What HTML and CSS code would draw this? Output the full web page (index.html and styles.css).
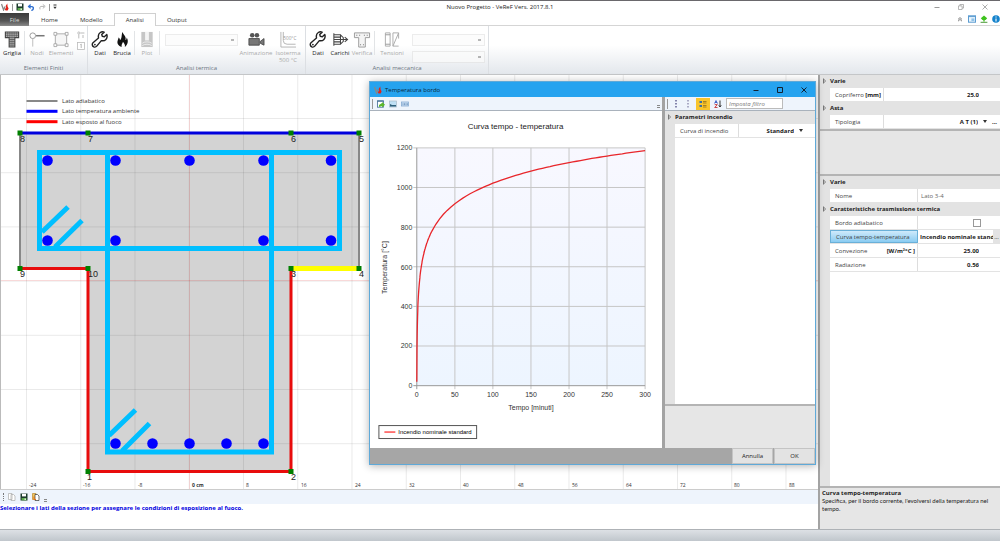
FILE: index.html
```html
<!DOCTYPE html>
<html lang="it">
<head>
  <meta charset="UTF-8">
  <meta name="viewport" content="width=device-width, initial-scale=1.0">
  <title>Nuovo Progetto - VeReF Vers. 2017.8.1</title>
  <link rel="stylesheet" href="styles.css">
</head>
<body>
  <svg class="defs" aria-hidden="true">
    <symbol id="logo" viewBox="0 0 8 8">
      <path d="M0.5 1 L2.6 7 L4 3.6" fill="none" stroke="#888" stroke-width="1.3"/>
      <path d="M6.3 0.4 L4.6 3 L5.2 4.4 L3.8 6.2 L4.6 7.6 L6.6 7.6 L7.6 5.4 L6.6 3.6 Z" fill="#e2231a"/>
    </symbol>
    <symbol id="floppy" viewBox="0 0 8 8">
      <path d="M0.5 0.5h7v7h-7z" fill="#1d3b2c"/>
      <path d="M2 0.8h4v2.6h-4z" fill="#fff"/>
      <path d="M1.6 5h4.8v2.3h-4.8z" fill="#5cab4a"/>
      <path d="M4.6 5.4h1.2v1.6h-1.2z" fill="#fff"/>
    </symbol>
    <symbol id="wrench" viewBox="0 0 18 18">
      <path d="M16.2 3.6 L13.6 6.2 L11.4 5.6 L10.8 3.6 L13.4 1.2 C10.6 0.2 7.4 1.8 7.2 5.4 L7.4 7.4 L1.6 12.4 C0.2 13.8 0.8 16 2.4 16.8 C3.8 17.4 5 16.8 5.8 15.8 L10.4 10.2 C14.2 11.2 17.6 8 16.2 3.6 Z" fill="none" stroke="#222" stroke-width="1.5" stroke-linejoin="round"/>
      <circle cx="3.6" cy="14.4" r="0.9" fill="#222"/>
    </symbol>
  </svg>

  <header class="titlebar">
    <div class="quick">
      <svg class="ic8"><use href="#logo"/></svg>
      <i class="bar"></i>
      <svg class="ic8"><use href="#floppy"/></svg>
      <svg class="ic8" viewBox="0 0 8 8"><path d="M1.5 3.6 H5 Q7 3.8 6 6.6 L4.4 7.6" fill="none" stroke="#2f6fd0" stroke-width="1.4"/><path d="M3.6 0.8 L0.6 3.6 L3.6 6 Z" fill="#2f6fd0"/></svg>
      <svg class="ic8" viewBox="0 0 8 8"><path d="M6 3.4 H3 Q1 3.8 2 6.4" fill="none" stroke="#b4b4b4" stroke-width="1"/><path d="M4.8 1.4 L7.2 3.4 L4.8 5.4" fill="none" stroke="#b4b4b4"/></svg>
      <i class="bar"></i>
      <svg class="ic4" viewBox="0 0 4 6"><path d="M0.5 1h3" stroke="#333"/><path d="M0.3 2.8h3.4L2 5z" fill="#333"/></svg>
    </div>
    <h1>Nuovo Progetto - VeReF Vers. 2017.8.1</h1>
    <div class="winbtns">
      <button aria-label="Riduci"><svg class="ic6" viewBox="0 0 6 6"><path d="M0.5 3.5h5" stroke="#999"/></svg></button>
      <button aria-label="Ripristina"><svg class="ic6" viewBox="0 0 6 6"><path d="M0.5 1.9h3.6v3.6h-3.6zM1.9 1.9V0.5h3.6v3.6H4.1" fill="none" stroke="#999" stroke-width="0.7"/></svg></button>
      <button aria-label="Chiudi"><svg class="ic6" viewBox="0 0 6 6"><path d="M0.5 0.5l5 5M5.5 0.5l-5 5" stroke="#999" stroke-width="0.8"/></svg></button>
    </div>
  </header>

  <nav class="tabs">
    <button class="tab file">File</button>
    <button class="tab">Home</button>
    <button class="tab">Modello</button>
    <button class="tab active">Analisi</button>
    <button class="tab">Output</button>
    <div class="tabicons">
      <svg class="ic8" viewBox="0 0 8 8"><path d="M2 4.4L4 2.6L6 4.4M2 6.2L4 4.4L6 6.2" fill="none" stroke="#777" stroke-width="0.9"/></svg>
      <svg class="ic8" viewBox="0 0 8 8"><rect x="0.5" y="0.8" width="7" height="6.4" fill="#eaf5fd" stroke="#5b9bd0"/><path d="M0.5 1.6h7" stroke="#5b9bd0"/><path d="M3.4 3.4h3v2.6h-3z" fill="#8fc2e8"/></svg>
      <svg class="ic8" viewBox="0 0 8 8"><path d="M4 0.4L7.2 3.2L5.6 5H4.7V6.4H3.3V5H2.4L0.8 3.2z" fill="#3fc31e"/><path d="M0.6 7.3h6.8" stroke="#4d9a3a"/></svg>
      <svg class="ic8" viewBox="0 0 8 8"><circle cx="4" cy="4" r="3.8" fill="#1583cc"/><path d="M4 3.4v3M4 1.6v1" stroke="#fff" stroke-width="1.1"/></svg>
    </div>
  </nav>

  <section class="ribbon">
    <div class="group">
      <div class="tools">
        <button class="tool">
          <svg viewBox="0 0 18 18"><path d="M2 1h14v6h-4v10H6V7H2z" fill="#d8d8d8" stroke="#444" stroke-width="1.2"/><path d="M2 3h14M2 5h14M6 7h6M6 9h6M6 11h6M6 13h6M6 15h6M4 1v6M6 1v6M8 1v16M10 1v16M12 1v6M14 1v6" stroke="#444" stroke-width="0.7"/></svg>
          <span>Griglia</span>
        </button>
        <i class="sep"></i>
        <button class="tool off">
          <svg viewBox="0 0 18 18"><circle cx="4.5" cy="5" r="3" fill="none" stroke="#999"/><path d="M8 5h9" stroke="#777" stroke-width="1.6"/><path d="M4.5 8.5v8" stroke="#bbb"/></svg>
          <span>Nodi</span>
        </button>
        <button class="tool off mid">
          <svg viewBox="0 0 18 18"><path d="M3 3h12v12H3z" fill="#f6f6f6" stroke="#aaa"/><path d="M1.5 1.5h3v3h-3zM13.5 1.5h3v3h-3zM1.5 13.5h3v3h-3zM13.5 13.5h3v3h-3z" fill="#fff" stroke="#999" stroke-width="0.8"/></svg>
          <span>Elementi</span>
        </button>
        <div class="minis">
          <svg class="ic8" viewBox="0 0 8 8"><circle cx="1.8" cy="2" r="1.1" fill="none" stroke="#aaa" stroke-width="0.7"/><path d="M3.4 2h4M1.8 3.4v4M6 4v3" stroke="#aaa" stroke-width="0.8"/></svg>
          <svg class="ic8" viewBox="0 0 8 8"><rect x="0.5" y="0.5" width="7" height="7" fill="#fff" stroke="#bbb" stroke-width="0.8"/><path d="M3.4 2.6L4.2 2v4" fill="none" stroke="#999" stroke-width="0.7"/></svg>
        </div>
      </div>
      <h2>Elementi Finiti</h2>
    </div>
    <div class="group">
      <div class="tools">
        <button class="tool"><svg><use href="#wrench"/></svg><span>Dati</span></button>
        <button class="tool">
          <svg viewBox="0 0 18 18"><path d="M9.5 1 C10.5 4 14 6 12.6 9.6 C13.8 9.2 14 8 13.8 6.8 C16 9.6 15.6 14 12 17 C12.6 14.6 11.4 13.2 10 11.4 C9.8 13 8.4 13.4 8.6 17 C5.4 16 3.4 13.4 4.4 10.4 C4.8 9 5.4 8.2 5.2 7 C6.6 7.8 6.8 8.6 6.8 9.8 C9.4 7.4 8.2 4 9.5 1 Z" fill="#111"/></svg>
          <span>Brucia</span>
        </button>
        <i class="sep"></i>
        <button class="tool off">
          <svg viewBox="0 0 18 18"><path d="M3 1h12v16H3z" fill="#c6c6c6"/><path d="M7 1h4v9H7z" fill="#f4f4f4"/><path d="M4 13c2-2 8-2 10 0M4 15.5c2-2 8-2 10 0" fill="none" stroke="#eee"/></svg>
          <span>Plot</span>
        </button>
        <i class="sep"></i>
        <div class="combos"><select aria-label="Plot termico" disabled><option></option></select></div>
        <button class="tool off wide">
          <svg viewBox="0 0 18 18"><circle cx="5" cy="4.4" r="2.4" fill="#555"/><circle cx="10" cy="4.4" r="2.4" fill="#555"/><path d="M1.5 8h11v7h-11zM13.5 11l4-3v7l-4-2z" fill="#777" stroke="#444" stroke-width="0.9"/></svg>
          <span>Animazione</span>
        </button>
        <button class="tool off wide">
          <svg viewBox="0 0 18 18"><path d="M1.5 1v16h16M4 1v9q0 4 4 4h9" fill="none" stroke="#aaa" stroke-width="0.9"/><text x="4" y="9" class="deg">500°C</text></svg>
          <span>Isoterma<br>500 °C</span>
        </button>
      </div>
      <h2>Analisi termica</h2>
    </div>
    <div class="group">
      <div class="tools">
        <button class="tool"><svg><use href="#wrench"/></svg><span>Dati</span></button>
        <button class="tool">
          <svg viewBox="0 0 18 18"><path d="M2.5 2.5v13M2.5 4h7v10h-7M2.5 9h14M2.5 6.5h7M2.5 11.5h7M9.5 4l3 3v4l-3 3M14 6.5l3 2.5l-3 2.5" fill="none" stroke="#444" stroke-width="1.1"/></svg>
          <span>Carichi</span>
        </button>
        <button class="tool off">
          <svg viewBox="0 0 18 18"><path d="M1 2h16v5h-4.5v10h-7V7H1z" fill="#f4f4f4" stroke="#999"/><path d="M3 4.5h1M6 4.5h1M11 4.5h1M14 4.5h1M7 14.5h1M10 14.5h1" stroke="#777" stroke-width="1.2"/></svg>
          <span>Verifica</span>
        </button>
        <i class="sep"></i>
        <button class="tool off wide">
          <svg viewBox="0 0 18 18"><path d="M2 2h5v14H2zM10 2h6M10 16h6M10 2v14M16 2L10 16M16 2v6" fill="none" stroke="#aaa"/><path d="M2 4h5M2 14h5" stroke="#999"/></svg>
          <span>Tensioni</span>
        </button>
        <div class="combos">
          <select aria-label="Tensione" disabled><option></option></select>
          <select aria-label="Combinazione" disabled><option></option></select>
        </div>
      </div>
      <h2>Analisi meccanica</h2>
    </div>
  </section>

  <div class="work">
    <main class="left">
      <svg class="drawing" viewBox="0 75 818 414" preserveAspectRatio="xMinYMin slice">
        <defs>
          <pattern id="grid" x="26" y="118" width="54.25" height="54.2" patternUnits="userSpaceOnUse">
            <path d="M0.5 0V54.2M0 0.5H54.25" stroke="#000" stroke-opacity="0.1" stroke-width="0.8"/>
          </pattern>
        </defs>
        <path class="concrete" d="M20 133H359V268H291V471H88V268H20Z"/>
        <rect x="0" y="75" width="818" height="414" fill="url(#grid)"/>
        <path d="M189.5 75V489M0 280.5H818" stroke="#f00" stroke-opacity="0.12"/>
        <path d="M0.5 75V489" stroke="#bbb"/>
        <g class="stirrup">
          <rect x="39.5" y="152.5" width="300" height="96"/>
          <rect x="107.5" y="152.5" width="164" height="299.5"/>
          <path d="M42 232L68 207M55 247L82 220.5M109 435.5L135.5 410M122 451L149.5 423.5"/>
        </g>
        <g class="bars">
          <circle cx="47.5" cy="160.5" r="5.3"/><circle cx="115.5" cy="160.5" r="5.3"/><circle cx="189.5" cy="160.5" r="5.3"/><circle cx="263.5" cy="160.5" r="5.3"/><circle cx="331" cy="160.5" r="5.3"/>
          <circle cx="47.5" cy="240.5" r="5.3"/><circle cx="115.5" cy="240.5" r="5.3"/><circle cx="263.5" cy="240.5" r="5.3"/><circle cx="331" cy="240.5" r="5.3"/>
          <circle cx="115.5" cy="443.5" r="5.3"/><circle cx="152.5" cy="443.5" r="5.3"/><circle cx="189.5" cy="443.5" r="5.3"/><circle cx="226.5" cy="443.5" r="5.3"/><circle cx="263.5" cy="443.5" r="5.3"/>
        </g>
        <path d="M20 133V268M359 133V268" stroke="#888" stroke-width="2"/>
        <path d="M20 133H359" stroke="#00d" stroke-width="3"/>
        <path d="M20 268.5H88V471.5H291V268.5" fill="none" stroke="#e80c0c" stroke-width="3"/>
        <path d="M291 268.5H359" stroke="#ff0" stroke-width="5"/>
        <g class="nodetext">
          <text x="20" y="142">8</text><text x="88" y="142">7</text><text x="291" y="142">6</text><text x="359" y="142">5</text>
          <text x="20" y="277">9</text><text x="88" y="277">10</text><text x="291" y="277">3</text><text x="359" y="277">4</text>
          <text x="87" y="480">1</text><text x="291" y="480">2</text>
        </g>
        <path class="nodes" d="M17.5 130.5h5v5h-5zM85.5 130.5h5v5h-5zM288.5 130.5h5v5h-5zM356.5 130.5h5v5h-5zM17.5 266h5v5h-5zM85.5 266h5v5h-5zM288.5 266h5v5h-5zM356.5 266h5v5h-5zM85.5 469h5v5h-5zM288.5 469h5v5h-5z"/>
        <path d="M26.5 101H57.5" stroke="#888" stroke-width="2"/>
        <path d="M26.5 111.3H57.5" stroke="#00f" stroke-width="3"/>
        <path d="M26.5 121.7H57.5" stroke="#f00" stroke-width="3"/>
        <g class="keytext">
          <text x="62" y="103">Lato adiabatico</text><text x="62" y="113">Lato temperatura ambiente</text><text x="62" y="124">Lato esposto al fuoco</text>
        </g>
        <g class="scale">
          <text x="29" y="487">-24</text><text x="83" y="487">-16</text><text x="138" y="487">-8</text><text x="192" y="487" class="zero">0 cm</text><text x="246" y="487">8</text><text x="301" y="487">16</text><text x="355" y="487">24</text><text x="409" y="487">32</text><text x="463" y="487">40</text><text x="518" y="487">48</text><text x="572" y="487">56</text><text x="626" y="487">64</text><text x="680" y="487">72</text><text x="734" y="487">80</text><text x="789" y="487">88</text>
        </g>
      </svg>
      <div class="filebar">
        <i class="grip"></i>
        <svg class="ic8" viewBox="0 0 8 8"><path d="M0.5 0.5h3.5v6h-3.5zM3 1.5h2.5L7 3v4.5H3z" fill="#fff" stroke="#aaa" stroke-width="0.7"/></svg>
        <svg class="ic8"><use href="#floppy"/></svg>
        <svg class="ic8" viewBox="0 0 8 8"><path d="M0.5 0.5h3.5v6h-3.5z" fill="#f7c65b" stroke="#b98a30" stroke-width="0.7"/><path d="M3 1.5h2.5L7 3v4.5H3z" fill="#fff" stroke="#333" stroke-width="0.7"/><path d="M2 3.5v3h2" fill="none" stroke="#e07018"/></svg>
        <span class="more"></span>
      </div>
      <p class="hint">Selezionare i lati della sezione per assegnare le condizioni di esposizione al fuoco.</p>
    </main>

    <aside class="side">
      <section class="props">
        <h3>Varie</h3>
        <div class="row"><label for="cop">Copriferro <b>[mm]</b></label><input id="cop" value="25.0"></div>
        <h3>Asta</h3>
        <div class="row"><label for="tipo">Tipologia</label><div class="pick"><select id="tipo"><option>A T (1)</option></select></div><button class="dots plain">...</button></div>
      </section>
      <div class="info tall"></div>
      <section class="props second">
        <h3>Varie</h3>
        <div class="row"><label for="nome">Nome</label><input id="nome" class="name" value="Lato 3-4" readonly></div>
        <h3>Caratteristiche trasmissione termica</h3>
        <div class="row"><label for="adiab">Bordo adiabatico</label><div class="tick"><input id="adiab" type="checkbox"></div></div>
        <div class="row selected"><label for="curva">Curva tempo-temperatura</label><input id="curva" class="cut" value="Incendio nominale standard"><button class="dots">...</button></div>
        <div class="row"><label for="conv">Convezione <b>[W/m²°C ]</b></label><input id="conv" value="25.00"></div>
        <div class="row"><label for="rad">Radiazione</label><input id="rad" value="0.56"></div>
      </section>
      <div class="info">
        <h4>Curva tempo-temperatura</h4>
        <p>Specifica, per il bordo corrente, l'evolversi della temperatura nel tempo.</p>
      </div>
    </aside>
  </div>

  <footer class="status"></footer>

  <div class="dialog" role="dialog" aria-labelledby="dlgtitle">
    <header>
      <svg class="ic8"><use href="#logo"/></svg>
      <h2 id="dlgtitle">Temperatura bordo</h2>
      <div class="winbtns">
        <button aria-label="Riduci"><svg class="ic6" viewBox="0 0 6 6"><path d="M0.5 3.5h5" stroke="#123"/></svg></button>
        <button aria-label="Ingrandisci"><svg class="ic6" viewBox="0 0 6 6"><path d="M0.5 0.5h5v5h-5z" fill="none" stroke="#123"/></svg></button>
        <button aria-label="Chiudi"><svg class="ic6" viewBox="0 0 6 6"><path d="M0.5 0.5l5 5M5.5 0.5l-5 5" stroke="#123"/></svg></button>
      </div>
    </header>
    <div class="panes">
      <section class="graph">
        <div class="bar1">
          <i class="line"></i>
          <svg class="ic8" viewBox="0 0 8 8"><rect x="0.5" y="0.8" width="6" height="6.4" fill="#fff" stroke="#3c6a93" stroke-width="0.8"/><path d="M0.5 1.2h6" stroke="#3c6a93"/><path d="M2 5l3-2V2l3 2.7L5 7.4V6L2 7z" fill="#5cb82c"/></svg>
          <svg class="ic8" viewBox="0 0 8 8"><rect x="0.5" y="1" width="7" height="6" fill="#bfe0f5" stroke="#a9bac8" stroke-width="0.7"/><path d="M1 6.6V4l2 1h4v1.6z" fill="#2f5f7a"/></svg>
          <svg class="ic8" viewBox="0 0 8 8"><rect x="0.5" y="2" width="7" height="4" fill="#cfe2f5" stroke="#85abd2" stroke-width="0.8"/><path d="M2 3.2v2M3.5 3.2v2M5 3.2v2M6.4 3.2v2" stroke="#5d87b5" stroke-width="0.7"/></svg>
          <span class="more"></span>
        </div>
        <svg class="chart" viewBox="0 0 292 338">
          <defs>
            <linearGradient id="sky" x1="0" y1="0" x2="0" y2="1"><stop offset="0" stop-color="#f8f8ff"/><stop offset="1" stop-color="#edf5ff"/></linearGradient>
          </defs>
          <rect x="46.5" y="37" width="229" height="238.5" fill="url(#sky)"/>
          <path class="lines" d="M43 37H275.5M43 76.7H275.5M43 116.5H275.5M43 156.2H275.5M43 196H275.5M43 235.7H275.5M84.7 37V279M122.8 37V279M161 37V279M199.2 37V279M237.3 37V279M275.5 37V279"/>
          <path class="axes" d="M46.5 37V279M43 275.5H275.5"/>
          <path id="curve" class="curve" d=""/>
          <text x="145.5" y="18" class="title">Curva tempo - temperatura</text>
          <g class="ylab">
            <text x="42" y="39.5">1200</text><text x="42" y="79">1000</text><text x="42" y="119">800</text><text x="42" y="159">600</text><text x="42" y="198.5">400</text><text x="42" y="238">200</text><text x="42" y="278">0</text>
          </g>
          <g class="xlab">
            <text x="46.5" y="287">0</text><text x="84.7" y="287">50</text><text x="122.8" y="287">100</text><text x="161" y="287">150</text><text x="199.2" y="287">200</text><text x="237.3" y="287">250</text><text x="275.5" y="287">300</text>
            <text x="161" y="300">Tempo [minuti]</text>
            <text transform="translate(17 157) rotate(-90)">Temperatura [°C]</text>
          </g>
          <rect x="8.5" y="315.5" width="98" height="13" fill="#fff" stroke="#555"/>
          <path d="M14 322H25" stroke="#f22" stroke-width="1.2"/>
          <text x="28" y="324" class="key">Incendio nominale standard</text>
        </svg>
      </section>
      <section class="params">
        <div class="bar2">
          <i class="line"></i>
          <svg class="ic8" viewBox="0 0 8 8"><path d="M4 0v8" stroke="#6a6a9a" stroke-width="1.6" stroke-dasharray="1.5 1.5"/></svg>
          <svg class="ic8" viewBox="0 0 8 8"><path d="M4 0v8" stroke="#9a9ab8" stroke-width="1.6" stroke-dasharray="1.5 1.5"/></svg>
          <button class="cat" aria-label="Per categoria"><svg class="ic8" viewBox="0 0 8 8"><path d="M0.5 1h2.5v2H0.5zM0.5 5h2.5v2H0.5z" fill="#3a6fa5"/><path d="M4 1.5h3.5M4 3h3.5M4 5.5h3.5M4 7h3.5" stroke="#85621a" stroke-width="0.7"/></svg></button>
          <svg class="ic8" viewBox="0 0 8 8"><path d="M0.5 3.5L2 0.5l1.5 3M1 2.5h2" fill="none" stroke="#2b50c0" stroke-width="0.8"/><path d="M0.7 4.6h2.6L0.7 7.5h2.8" fill="none" stroke="#c02020" stroke-width="0.8"/><path d="M6 0.5v6M4.8 5.3L6 7l1.2-1.7" fill="none" stroke="#222" stroke-width="0.9"/></svg>
          <input type="text" aria-label="Filtro" placeholder="Imposta filtro">
        </div>
        <div class="props fill">
          <h3>Parametri incendio</h3>
          <div class="row"><label for="inc">Curva di incendio</label><div class="pick"><select id="inc"><option>Standard</option></select></div></div>
        </div>
        <div class="info"></div>
      </section>
    </div>
    <footer>
      <button>Annulla</button>
      <button>OK</button>
    </footer>
  </div>

  <script src="script.js"></script>
</body>
</html>
```
FILE: styles.css
```css
* { box-sizing: border-box; }
body {
  margin: 0;
  height: 100vh;
  display: flex;
  flex-direction: column;
  border-top: 1px solid #6a686c;
  background: #fff;
  color: #222;
  font-family: "Open Sans", "Noto Sans", sans-serif;
  font-size: 6px;
  line-height: 8px;
  overflow: hidden;
}
h1, h2, h3, h4, p { margin: 0; font-size: 6px; font-weight: normal; }
button, input, select {
  margin: 0;
  padding: 0;
  border: none;
  border-radius: 0;
  background: none;
  color: inherit;
  font: inherit;
}
svg { display: block; flex: none; }
.defs { position: absolute; width: 0; height: 0; }
.ic8 { width: 8px; height: 8px; }
.ic6 { width: 6px; height: 6px; }
.ic4 { width: 4px; height: 6px; }

/* title */
.titlebar {
  display: grid;
  grid-template-columns: 1fr auto 1fr;
  align-items: center;
  height: 12px;
}
.quick { display: flex; align-items: center; gap: 3px; padding-left: 1px; }
.quick .bar { width: 1px; height: 7px; background: #999; }
.winbtns { display: flex; justify-content: flex-end; gap: 12px; padding-right: 9px; }
.winbtns button { display: flex; padding: 3px; }

/* tabs */
.tabs { display: flex; height: 13px; border-bottom: 1px solid #d5d5d5; }
.tab { padding: 0 11px; height: 13px; color: #333; }
.tab.file {
  width: 29px;
  margin-right: 1px;
  padding: 0;
  background: linear-gradient(#3a3a3a, #555 60%, #8a8a8a);
  color: #ddd;
}
.tab.active { border: 1px solid #d0d0d0; border-bottom: none; background: #fff; }
.tabicons { display: flex; align-items: center; gap: 4px; margin-left: auto; }

/* ribbon */
.ribbon {
  display: flex;
  height: 49px;
  background: linear-gradient(#fff 40%, #e3e7ec);
  border-bottom: 1px solid #c4c6c8;
}
.group {
  display: flex;
  flex-direction: column;
  padding: 5px 1px 2px;
  border-right: 1px solid #dcdfe3;
}
.group h2 { text-align: center; color: #6a7480; }
.tools { display: flex; flex: 1; }
.tool {
  display: flex;
  flex-direction: column;
  align-items: center;
  width: 22px;
  line-height: 7px;
  color: #222;
  white-space: nowrap;
}
.tool.mid { width: 26px; }
.tool.wide { width: 32px; }
.tool svg { width: 18px; height: 17px; }
.tool span { margin-top: 2px; }
.tool.off { color: #aaa; }
.deg { font-size: 5px; fill: #999; }
.sep { width: 1px; height: 24px; margin: 0 1px; background: #e2e4e6; }
.minis { display: flex; flex-direction: column; gap: 3px; padding: 0 1px 0 3px; }
.combos { display: flex; flex-direction: column; gap: 5px; padding: 3px 2px 0 4px; }
.combos select, .pick select { appearance: none; }
.combos select {
  width: 73px;
  height: 12px;
  border: 1px solid #e4e4e4;
  background: linear-gradient(#999, #999) no-repeat right 3px center / 3px 2px, #fbfbfb;
}

/* work area */
.work { display: flex; flex: 1; min-height: 0; }
.left { display: flex; flex: 1; flex-direction: column; min-width: 0; }
.drawing { flex: 1; width: 100%; min-height: 0; }
.concrete { fill: #d3d3d3; }
.stirrup { fill: none; stroke: #00bfff; stroke-width: 5px; }
.bars { fill: #00f; }
.nodes { fill: #008000; }
.nodetext { font-family: "Liberation Sans", Arial, sans-serif; font-size: 9px; fill: #222; }
.keytext { font-size: 6px; fill: #333; }
.scale { font-size: 5px; fill: #333; }
.zero { font-weight: bold; }
.filebar {
  display: flex;
  align-items: center;
  gap: 4px;
  height: 15px;
  padding-left: 3px;
  border-top: 1px solid #ccc;
  background: #eef4fc;
}
.grip { height: 8px; border-left: 1px dotted #777; }
.more { width: 3px; height: 3px; align-self: flex-end; margin-bottom: 2px; border-top: 1px solid #888; border-bottom: 1px solid #888; }
.hint { height: 25px; color: #0000e0; font-weight: bold; }

/* property panels */
.side {
  display: flex;
  flex-direction: column;
  width: 182px;
  border-left: 2px solid #a3a3a3;
}
.props { background: linear-gradient(90deg, #e3e3e3 10px, #fff 10px); }
.props h3 {
  position: relative;
  height: 13px;
  padding-left: 10px;
  line-height: 13px;
  font-weight: bold;
  background: #e3e3e3;
}
.props h3::before, .props h3::after {
  content: "";
  position: absolute;
  left: 3px;
  top: 3px;
  border: 3px solid transparent;
  border-left: 3px solid #777;
  border-right: none;
}
.props h3::after {
  left: 4px;
  top: 5px;
  border-width: 1px;
  border-left: 1px solid #f4f4f4;
}
.row { display: flex; height: 14px; margin-left: 10px; border-bottom: 1px solid #e3e3e3; background: #fff; }
.row label {
  display: flex;
  align-items: center;
  justify-content: space-between;
  width: 54px;
  padding: 0 2px 0 5px;
  border-right: 1px solid #ddd;
  color: #444;
  white-space: nowrap;
}
.row label b { color: #222; }
.row input { flex: 1; min-width: 0; padding-right: 21px; text-align: right; font-weight: bold; }
.row input.name { padding-left: 3px; text-align: left; font-weight: normal; color: #666; }
.row input.cut { padding: 0 0 0 2px; text-align: left; }
.second .row label { width: 88px; }
.second { flex: 1; }
.tick { display: flex; flex: 1; align-items: center; justify-content: flex-end; padding-right: 19px; }
.row .tick input { flex: none; appearance: none; width: 8px; height: 8px; padding: 0; border: 1px solid #999; background: #fff; }
.selected label { border: 1px solid #6ab0d8; background: linear-gradient(#cfeafb, #8accf2); }
.pick { position: relative; flex: 1; display: flex; }
.pick select { width: 100%; padding-right: 21px; text-align: right; font-weight: bold; }
.side .pick select { padding-right: 11px; }
.pick::after {
  content: "";
  position: absolute;
  right: 12px;
  top: 5px;
  border: 2px solid transparent;
  border-top: 3px solid #333;
  border-bottom: none;
}
.side .pick::after { right: 2px; }
.dots { width: 7px; background: #e3e3e3; }
.dots.plain { width: 11px; background: none; font-weight: bold; }
.info { height: 43px; padding: 1px 2px; border-top: 2px solid #b4b4b4; background: #e6e6e6; }
.info.tall { height: 47px; border-bottom: 2px solid #b4b4b4; }
.info h4 { font-weight: bold; }
.info p { font-family: Lato, "Open Sans", sans-serif; }
.status { height: 12px; border-top: 1px solid #aeb2b6; background: linear-gradient(#dde1e5, #c0c6cc); }

/* dialog */
.dialog {
  position: absolute;
  left: 369px;
  top: 81px;
  width: 447px;
  height: 384px;
  display: flex;
  flex-direction: column;
  border: 1px solid #5fa9d8;
  background: #fff;
  box-shadow: 0 1px 8px rgba(0, 0, 0, 0.3);
}
.dialog header {
  display: flex;
  align-items: center;
  gap: 3px;
  height: 15px;
  padding-left: 4px;
  background: #26a3ef;
  color: #0c2538;
}
.dialog header .winbtns { margin-left: auto; padding-right: 5px; }
.panes { display: flex; flex: 1; min-height: 0; }
.graph { display: flex; flex: 1; flex-direction: column; min-width: 0; }
.bar1, .bar2 { display: flex; align-items: center; gap: 4px; height: 14px; border-bottom: 1px solid #a9b2bc; background: #eef4fc; }
.bar1 { padding: 0 2px; }
.bar1 .more { margin-left: auto; }
.line { width: 1px; height: 10px; background: #999; }
.chart { flex: 1; width: 100%; min-height: 0; font-family: "Liberation Sans", Arial, sans-serif; }
.lines { fill: none; stroke: #c6c6c6; }
.axes { fill: none; stroke: #999; }
.curve { fill: none; stroke: #e8262b; stroke-width: 1.3px; }
.title { font-size: 8px; text-anchor: middle; fill: #222; }
.ylab { font-size: 7px; text-anchor: end; fill: #333; }
.xlab { font-size: 7px; text-anchor: middle; fill: #333; }
.key { font-size: 6px; }
.params { display: flex; flex-direction: column; width: 153px; border-left: 3px solid #a3a3a3; }
.bar2 { padding-left: 2px; }
.cat { display: flex; padding: 2px 3px; background: #f8c52c; }
.bar2 input { width: 57px; height: 11px; padding-left: 2px; border: 1px solid #bbb; background: #fff; }
.bar2 input::placeholder { color: #777; font-style: italic; }
.fill { flex: 1; }
.fill .row label { width: 64px; }
.params .info { height: 44px; }
.dialog footer { display: flex; justify-content: flex-end; gap: 1px; height: 16px; background: #a6a6a6; }
.dialog footer button { width: 41px; border: 1px solid #c4c4c4; background: #e3e3e3; }
```
FILE: script.js
```js
// ISO 834: T = 20 + 345 log10(8t + 1)
const x0 = 46.5, y0 = 275.5, w = 229, h = 238.5;
const points = [];

for (let t = 0; t <= 300; t += t < 20 ? 0.25 : 5) {
  const temp = 20 + 345 * Math.log10(8 * t + 1);
  const x = x0 + t / 300 * w;
  const y = y0 - temp / 1200 * h;
  points.push(x.toFixed(1) + " " + y.toFixed(1));
}

document.getElementById("curve").setAttribute("d", "M" + points.join("L"));
```
